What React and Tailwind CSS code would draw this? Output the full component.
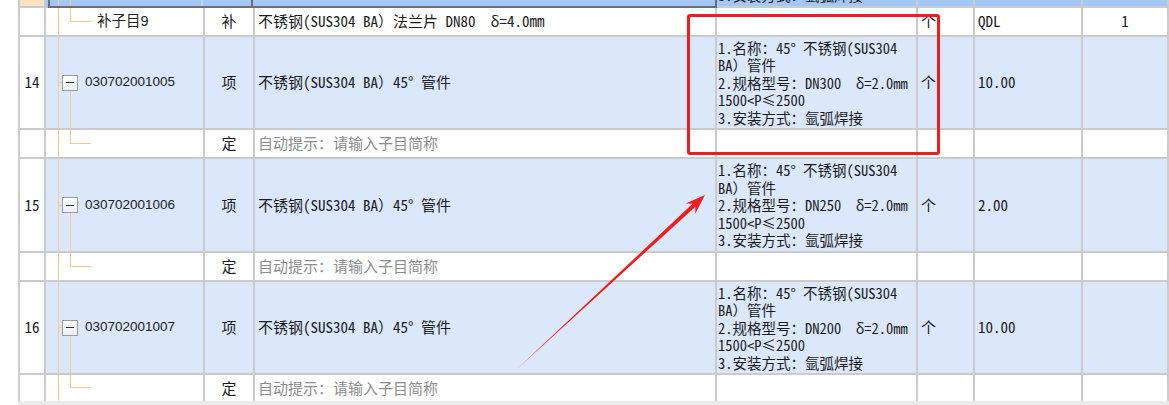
import React from "react";

const LINE = "border-[#f8c98d]";
const GRID = "border-[#cbcbcb]";
const MONO = "font-['Noto_Sans_Mono_CJK_SC','Noto_Sans_CJK_SC',monospace]";
const SANS = "font-['Liberation_Sans','Noto_Sans_CJK_SC',sans-serif]";
const COLS = "grid grid-cols-[26px_159px_50px_462px_201px_57px_108px_1fr]";

const desc = (dn) => [
  "1.名称：45° 不锈钢(SUS304",
  "BA）管件",
  `2.规格型号：${dn}\u00a0 δ=2.0mm`,
  "1500<P≤2500",
  "3.安装方式：氩弧焊接",
];

const rows = [
  { kind: "sub", label: "补子目9", type: "补", name: "不锈钢(SUS304 BA）法兰片 DN80\u00a0 δ=4.0mm", unit: "个", expr: "QDL", qty: "1", h: "h-[29px]" },
  { kind: "item", no: 14, label: "030702001005", type: "项", name: "不锈钢(SUS304 BA）45° 管件", desc: desc("DN300"), unit: "个", expr: "10.00", h: "h-[93px]" },
  { kind: "def", h: "h-[29px]" },
  { kind: "item", no: 15, label: "030702001006", type: "项", name: "不锈钢(SUS304 BA）45° 管件", desc: desc("DN250"), unit: "个", expr: "2.00", h: "h-[94px]" },
  { kind: "def", h: "h-[29px]" },
  { kind: "item", no: 16, label: "030702001007", type: "项", name: "不锈钢(SUS304 BA）45° 管件", desc: desc("DN200"), unit: "个", expr: "10.00", h: "h-[93px]" },
  { kind: "def", h: "h-[26px]", last: true },
];

const Cell = ({ className = "", last, children }) => (
  <div className={`border-r-2 ${last ? "" : "border-b-2"} ${GRID} overflow-hidden ${className}`}>
    {children}
  </div>
);

// collapse box in the tree column
const MinusBox = () => (
  <div className="w-[16px] h-[16px] border border-[#9c9c9c] bg-gradient-to-b from-white to-[#eceff3] flex items-center justify-center">
    <div className="w-[8px] border-t border-[#333]" />
  </div>
);

const TreeCell = ({ row }) => (
  <div className="h-full pl-[12px] flex">
    <div className={`h-full border-l ${LINE} flex-1 flex`}>
      {row.kind === "item" ? (
        <>
          <div className="flex items-center">
            <div className={`w-[3px] border-t ${LINE}`} />
          </div>
          <div className="flex flex-col w-[16px]">
            <div className="flex-1" />
            <MinusBox />
            <div className="flex-1 flex justify-center">
              <div className={`border-l ${LINE}`} />
            </div>
          </div>
          <div className={`ml-[7px] flex items-center text-[13.5px] text-[#222] ${SANS}`}>{row.label}</div>
        </>
      ) : (
        <div className="pl-[11px] flex">
          <div className="flex flex-col h-full">
            <div className={`h-1/2 w-[21px] border-l border-b ${LINE}`} />
          </div>
          {row.label && (
            <div className={`ml-[6px] flex items-center text-[14.5px] text-[#222] ${SANS}`}>{row.label}</div>
          )}
        </div>
      )}
    </div>
  </div>
);

const Row = ({ row }) => {
  const bg = row.kind === "item" ? "bg-[#dbe7fb]" : "bg-white";
  return (
    <div className={`${COLS} ${row.h}`}>
      <Cell last={row.last} className={`bg-white flex items-center justify-center ${MONO}`}>{row.no}</Cell>
      <Cell last={row.last} className={bg}>
        <TreeCell row={row} />
      </Cell>
      <Cell last={row.last} className={`${bg} flex items-center justify-center`}>{row.kind === "def" ? "定" : row.type}</Cell>
      <Cell last={row.last} className={`${bg} flex items-center pl-[3px] whitespace-nowrap`}>
        {row.kind === "def" ? <span className="text-[#8c8c8c]">自动提示：请输入子目简称</span> : row.name}
      </Cell>
      <Cell last={row.last} className={`${bg} flex flex-col justify-center pl-[1px] leading-[17.5px] text-[14.5px]`}>
        {row.desc && row.desc.map((l) => (
          <div key={l} className="whitespace-nowrap">{l}</div>
        ))}
      </Cell>
      <Cell last={row.last} className={`${bg} flex items-center pl-[3px]`}>{row.unit}</Cell>
      <Cell last={row.last} className={`${bg} flex items-center pl-[3px]`}>{row.expr}</Cell>
      <Cell last={row.last} className={`${bg} flex items-center justify-center`}>{row.qty}</Cell>
    </div>
  );
};

export default function App() {
  return (
    <div className={`relative w-[1169px] h-[405px] bg-white overflow-hidden text-[15px] text-[#1c1c1c] ${MONO}`}>
      <div className="pl-[18px] flex flex-col">
        <div className={`border-l-2 ${GRID}`}>
          {/* selected row, scrolled almost out of view */}
          <div className={`${COLS} h-[8px]`}>
            <Cell className="bg-[#fde2c1]" />
            <div className="col-span-3 bg-[#a3c8f5] pl-[2px] flex">
              <div className="flex-1 flex border-l-2 border-r-2 border-b-2 border-[#6e6e6e]">
                <div className={`w-[153px] border-r-2 border-[#c5d3e6] pl-[8px] flex`}>
                  <div className={`h-full border-l ${LINE} pl-[11px]`}>
                    <div className={`h-full border-l ${LINE}`} />
                  </div>
                </div>
                <div className="w-[50px] border-r-2 border-[#6e6e6e]" />
              </div>
            </div>
            <Cell className="bg-[#a3c8f5] pl-[1px]">
              <div className="-mt-[14px] leading-[17px] text-[14.5px] whitespace-nowrap">3.安装方式：氩弧焊接</div>
            </Cell>
            <Cell className="bg-[#a3c8f5]" />
            <Cell className="bg-[#a3c8f5]" />
            <Cell className="bg-[#a3c8f5]" />
          </div>
          {rows.map((r, i) => (
            <Row key={i} row={r} />
          ))}
        </div>
        <div className="h-[4px] bg-[#ebebeb]" />
      </div>

      {/* red annotation box */}
      <div className="absolute left-[687px] top-[14px] w-[253px] h-[141px] border-[3px] border-[#f21c1c] rounded-[3px]" />

      {/* red annotation arrow */}
      <svg className="absolute left-0 top-0" width="1169" height="405" viewBox="0 0 1169 405">
        <polygon
          points="517,369 695.4,206.7 695.2,213.7 705,195 685.6,203.5 692.6,203.7"
          fill="#f21c1c"
        />
      </svg>
    </div>
  );
}
